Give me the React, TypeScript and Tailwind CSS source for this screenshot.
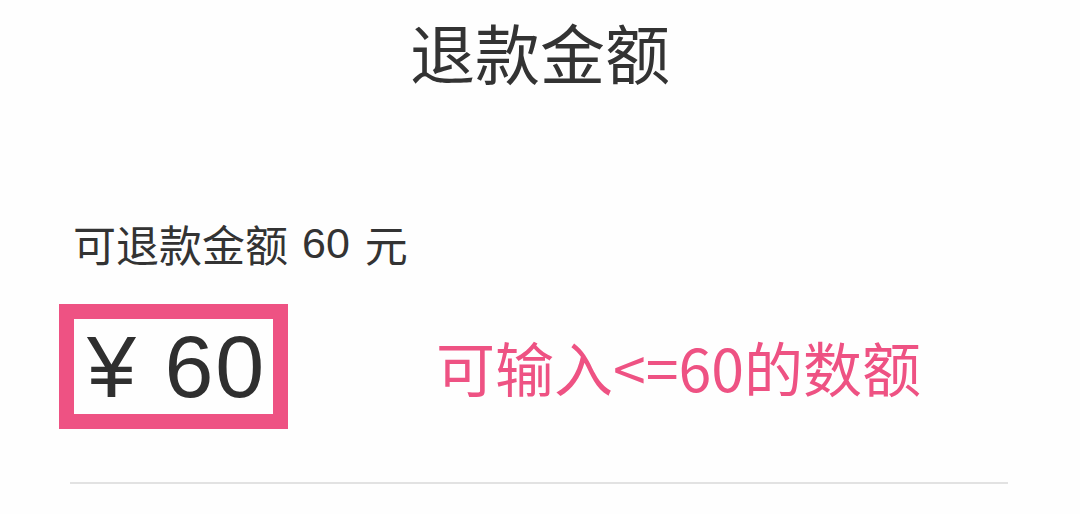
export default function App() {
  return (
    <div
      className="w-[1080px] h-[514px] bg-[#fefefe] overflow-hidden text-[#333333]"
      style={{ fontFamily: '"Noto Sans CJK SC", "Noto Sans", sans-serif' }}
    >
      {/* header */}
      <div className="pt-[18px] text-center text-[65px] leading-[66px]">退款金额</div>

      <div className="pl-[70px] pr-[72px]">
        {/* available amount */}
        <div className="mt-[137px] text-[43px] leading-[44px] flex items-center">
          <span className="ml-[3px]">可退款金额</span>
          <span className="ml-[14px] font-['Liberation_Sans',sans-serif]">60</span>
          <span className="ml-[15px]">元</span>
        </div>

        {/* amount input + hint */}
        <div className="mt-[39px] flex items-center">
          <div className="-ml-[11px] w-[229px] h-[125px] border-[15px] border-[#ee5283] flex items-center pl-[13px]">
            <span className="text-[88px] leading-none font-['Liberation_Sans',sans-serif] text-[#2f2f2f] tracking-[2px]">
              ¥ 60
            </span>
          </div>
          <div className="ml-[148px] text-[59px] leading-none text-[#ee5283]">可输入&lt;=60的数额</div>
        </div>

        {/* divider */}
        <div className="mt-[53px] h-[2px] bg-[#e2e2e2]" />
      </div>
    </div>
  );
}
